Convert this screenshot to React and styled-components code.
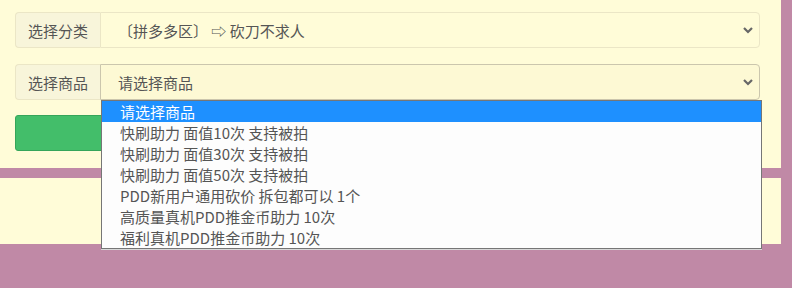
import React from 'react'
import styled, { createGlobalStyle } from 'styled-components'

const GlobalStyle = createGlobalStyle`
  html, body {
    margin: 0;
    padding: 0;
    background: #c089a6;
  }
  body {
    font-family: "Noto Sans CJK SC", "Noto Sans", sans-serif;
    width: 792px;
    height: 288px;
    overflow: hidden;
  }
`

const Page = styled.div`
  position: relative;
  width: 781px;
  display: flex;
  flex-direction: column;
  gap: 10px;
`

const Panel = styled.div`
  background: #fffcd8;
  height: ${({ h }) => h}px;
  box-sizing: border-box;
  padding: ${({ pad }) => pad || '0'};
  display: flex;
  flex-direction: column;
`

const Group = styled.div`
  display: flex;
  width: 745px;
  height: 36px;
  margin-bottom: ${({ mb }) => mb || 0}px;
`

const Addon = styled.div`
  width: 85px;
  box-sizing: border-box;
  display: flex;
  align-items: center;
  justify-content: center;
  background: #f8f5da;
  border: 1px solid #ebe6c6;
  border-right: none;
  border-radius: 4px 0 0 4px;
  color: #555;
  font-size: 15px;
`

const Select = styled.div`
  flex: 1;
  box-sizing: border-box;
  display: flex;
  align-items: center;
  justify-content: space-between;
  padding: 0 6px 0 17px;
  background: ${({ focus }) => (focus ? '#fdf9d4' : '#fffcd8')};
  border: 1px solid ${({ focus }) => (focus ? '#cbc6ad' : '#ebe6c6')};
  border-radius: 0 4px 4px 0;
  color: #555;
  font-size: 15px;
`

const Chevron = () => (
  <svg width="10" height="8" viewBox="0 0 10 8">
    <path d="M1 2 L5 6 L9 2" fill="none" stroke="#666" strokeWidth="2.2" />
  </svg>
)

const Button = styled.button`
  width: 745px;
  height: 36px;
  box-sizing: border-box;
  background: #43be6a;
  border: 1px solid #35a55a;
  border-radius: 3px;
  color: #fff;
  font-family: inherit;
  font-size: 15px;
`

const Dropdown = styled.ul`
  position: absolute;
  left: 101px;
  top: 100px;
  width: 659px;
  margin: 0;
  padding: 0;
  list-style: none;
  background: #fdfdfd;
  border: 1px solid #767676;
  box-shadow: 0 1px 0 #d8d8d8;
`

const Option = styled.li`
  height: 21px;
  line-height: 21px;
  padding-left: 18px;
  font-size: 15px;
  color: ${({ active }) => (active ? '#fff' : '#555')};
  background: ${({ active }) => (active ? '#1e90ff' : 'transparent')};
  white-space: nowrap;
`

const options = [
  '请选择商品',
  '快刷助力 面值10次 支持被拍',
  '快刷助力 面值30次 支持被拍',
  '快刷助力 面值50次 支持被拍',
  'PDD新用户通用砍价 拆包都可以 1个',
  '高质量真机PDD推金币助力 10次',
  '福利真机PDD推金币助力 10次',
]

export default function App() {
  return (
    <>
      <GlobalStyle />
      <Page>
        <Panel h={168} pad="12px 15px">
          <Group mb={16}>
            <Addon>选择分类</Addon>
            <Select>
              <span>〔拼多多区〕 ⇨ 砍刀不求人</span>
              <Chevron />
            </Select>
          </Group>
          <Group mb={15}>
            <Addon>选择商品</Addon>
            <Select focus>
              <span>请选择商品</span>
              <Chevron />
            </Select>
          </Group>
          <Button>立即购买</Button>
        </Panel>
        <Panel h={66} />
        <Dropdown>
          {options.map((o, i) => (
            <Option key={o} active={i === 0}>{o}</Option>
          ))}
        </Dropdown>
      </Page>
    </>
  )
}
